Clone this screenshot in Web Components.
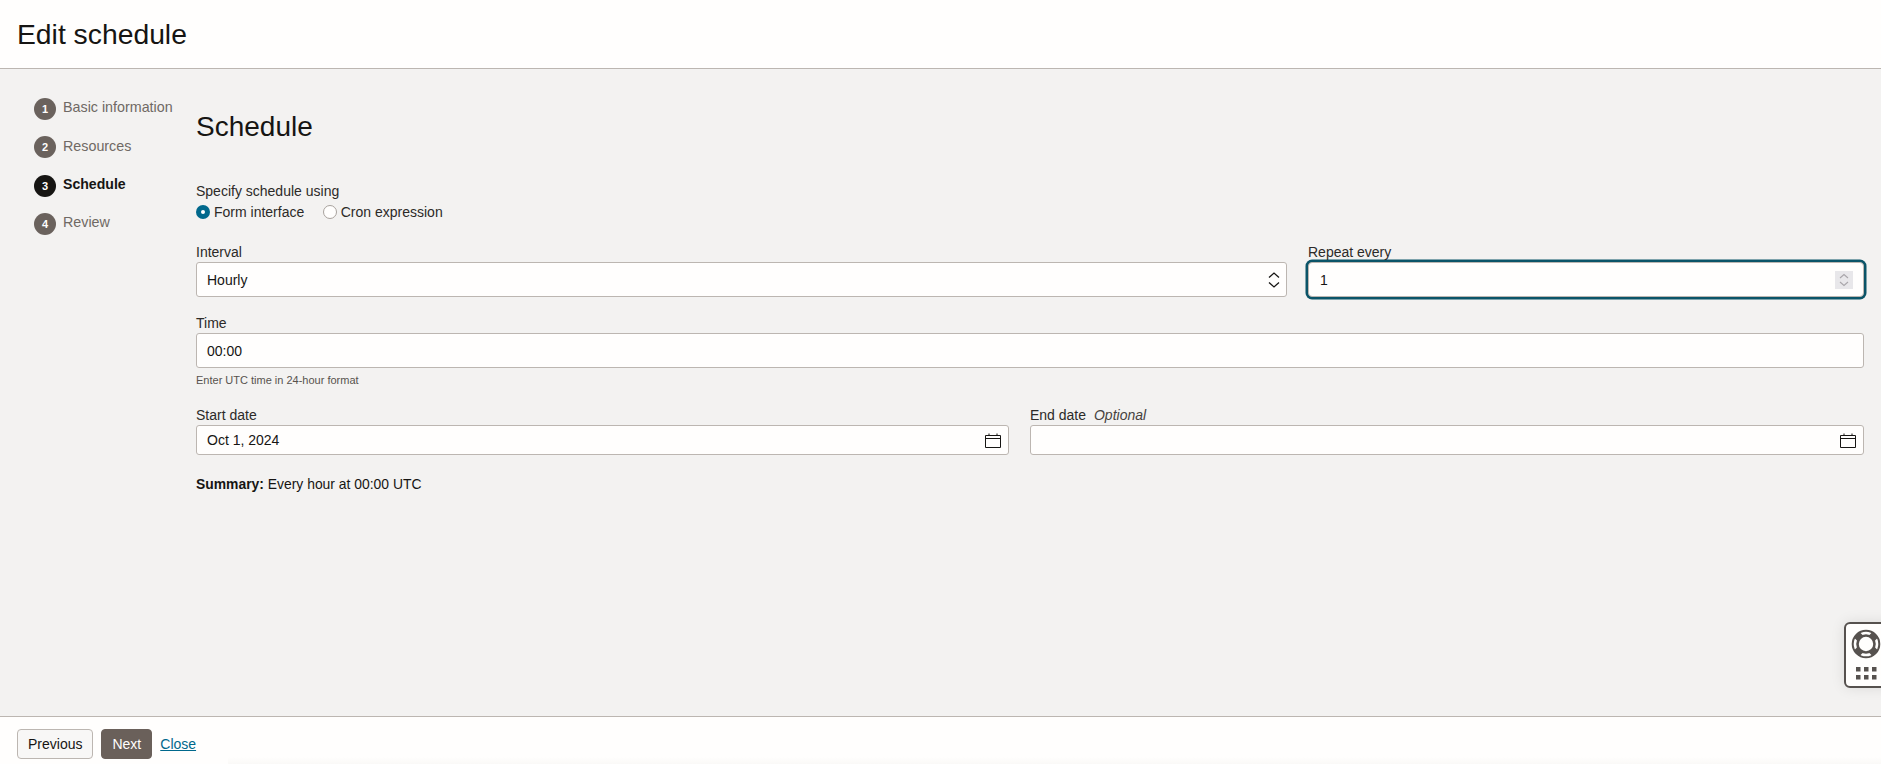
<!DOCTYPE html>
<html lang="en">
<head>
<meta charset="utf-8">
<title>Edit schedule</title>
<style>
  html, body { height: 100%; margin: 0; }
  body {
    display: flex;
    flex-direction: column;
    height: 764px;
    overflow: hidden;
    font-family: "Liberation Sans", Arial, sans-serif;
    color: #161513;
    background: #f3f2f1;
  }
</style>
</head>
<body>

<template id="tpl-page-header">
  <style>
    :host { display: flex; align-items: center; flex: none; box-sizing: border-box; height: 69px; padding: 0 17px; background: #fffefd; border-bottom: 1px solid #bcb6b1; }
    h1 { margin: 0; font-size: 28.300px; font-weight: 400; line-height: 36px; }
  </style>
  <h1><slot></slot></h1>
</template>

<template id="tpl-step-list">
  <style>
    :host { display: flex; flex-direction: column; gap: 16.33px; flex: none; box-sizing: border-box; width: 196px; padding: 29px 0 0 34px; }
  </style>
  <slot></slot>
</template>

<template id="tpl-step-item">
  <style>
    :host { display: flex; gap: 7px; height: 22px; font-size: 14.3px; line-height: 20px; color: #6f6964; white-space: nowrap; }
    :host([current]) { color: #161513; font-weight: 700; font-size: 14.1px; }
    .num { display: flex; align-items: center; justify-content: center; flex: none; width: 22px; height: 22px; border-radius: 50%; background: #6a625d; color: #fffefd; font-size: 11px; font-weight: 700; }
    :host([current]) .num { background: #161513; font-size: 11px; }
    .label { margin-top: -.6px; }
  </style>
  <span class="num"></span><span class="label"><slot></slot></span>
</template>

<template id="tpl-form-field">
  <style>
    :host { display: block; min-width: 0; font-size: 14px; }
    label { display: block; height: 17px; line-height: 14px; white-space: nowrap; color: #2c2a28; }
    i { margin-left: 4px; color: #46423f; }
    .hint { display: none; margin-top: 6px; font-size: 11px; line-height: 13px; color: #57524e; }
    :host([hint]) .hint { display: block; }
  </style>
  <label></label>
  <slot></slot>
  <div class="hint"></div>
</template>

<template id="tpl-text-box">
  <style>
    :host { display: flex; align-items: center; box-sizing: border-box; height: 35px; padding: 0 10px; background: #fffefd; border: 1px solid #bcb6b1; border-radius: 3px; font-size: 14px; color: #161513; }
    :host([compact]) { height: 30px; }
    :host([focused]) { box-shadow: 0 0 0 2.5px #0b5468; border-radius: 4px; }
    .value { flex: 1; white-space: nowrap; }
    :host([focused]) .value { padding-left: 1px; }
    svg { display: block; flex: none; }
    .cal { margin-right: -3px; }
    .spin { display: flex; align-items: center; justify-content: center; width: 18px; height: 18px; background: #e8e7ea; }
    .sel { margin-right: -4px; }
  </style>
  <span class="value"><slot></slot></span>
  <span class="icon"></span>
</template>

<template id="tpl-radio-group">
  <style>
    :host { display: block; font-size: 14px; color: #2c2a28; }
    .title { height: 21px; line-height: 21px; }
    .opts { display: flex; gap: 18.5px; height: 20px; align-items: center; }
  </style>
  <div class="title"></div>
  <div class="opts"><slot></slot></div>
</template>

<template id="tpl-radio-item">
  <style>
    :host { display: inline-flex; align-items: center; gap: 4px; white-space: nowrap; }
    .dot { box-sizing: border-box; width: 14px; height: 14px; border-radius: 50%; background: #fffefd; border: 1px solid #a8a29d; }
    :host([checked]) .dot { background: #00688c; border: 0; position: relative; }
    :host([checked]) .dot::after { content: ""; position: absolute; left: 5px; top: 5px; width: 4px; height: 4px; border-radius: 50%; background: #fff; }
  </style>
  <span class="dot"></span><slot></slot>
</template>

<template id="tpl-wizard-footer">
  <style>
    :host { display: flex; align-items: flex-start; gap: 8px; flex: none; box-sizing: border-box; height: 48px; padding: 12px 17px 0; background: #fffefd; border-top: 1px solid #bcb6b1; position: relative; }
    /* faint shadow along the bottom edge of the reference */
    :host::after { content: ""; position: absolute; left: 228px; right: 0; bottom: 0; height: 7px; background: linear-gradient(#fffefd, #faf9f7); }
  </style>
  <slot></slot>
</template>

<template id="tpl-wizard-button">
  <style>
    :host { display: inline-flex; align-items: center; justify-content: center; box-sizing: border-box; height: 30px; padding: 0 10px; font-size: 14px; border-radius: 4px; border: 1px solid #bcb6b1; background: #f8f7f6; color: #161513; }
    :host([primary]) { background: #6a605a; border-color: #6a605a; color: #fffefd; }
  </style>
  <slot></slot>
</template>

<template id="tpl-help-tab">
  <style>
    :host { position: absolute; left: 1844px; top: 622px; box-sizing: border-box; width: 50px; height: 66px; background: #fffefd; border: 2px solid #56514e; border-radius: 6px; box-shadow: 0 0 14px rgba(0,0,0,.1); }
    svg { position: absolute; display: block; }
    .buoy { left: 5px; top: 5px; }
    .dots { left: 10px; top: 43px; }
  </style>
  <svg class="buoy" width="30" height="30" viewBox="0 0 30 30" fill="none">
    <circle cx="15" cy="15" r="13.300" stroke="#56514e" stroke-width="2"/>
    <circle cx="15" cy="15" r="8.500" stroke="#56514e" stroke-width="2.600"/>
    <path d="M5.500 5.500 9.500 9.500M24.500 5.500 20.500 9.500M5.500 24.500 9.500 20.500M24.500 24.500 20.500 20.500" stroke="#56514e" stroke-width="8"/>
  </svg>
  <svg class="dots" width="24" height="13" viewBox="0 0 24 13" fill="#56514e">
    <rect x="0" y="0" width="4.500" height="4.500"/><rect x="8" y="0" width="4.500" height="4.500"/><rect x="16" y="0" width="4.500" height="4.500"/>
    <rect x="0" y="8" width="4.500" height="4.500"/><rect x="8" y="8" width="4.500" height="4.500"/><rect x="16" y="8" width="4.500" height="4.500"/>
  </svg>
</template>

<page-header>Edit schedule</page-header>

<div style="display:flex; flex:1; min-height:0">
  <step-list>
    <step-item num="1">Basic information</step-item>
    <step-item num="2">Resources</step-item>
    <step-item num="3" current>Schedule</step-item>
    <step-item num="4">Review</step-item>
  </step-list>
  <schedule-form></schedule-form>
</div>

<wizard-footer>
  <wizard-button>Previous</wizard-button>
  <wizard-button primary>Next</wizard-button>
  <wizard-link>Close</wizard-link>
</wizard-footer>

<help-tab></help-tab>

<script>
// clones a template into an open shadow root
function mount(el, id) {
  el.attachShadow({ mode: 'open' });
  el.shadowRoot.appendChild(document.getElementById(id).content.cloneNode(true));
  return el.shadowRoot;
}

const ICONS = {
  select: `<svg class="sel" width="12" height="16" viewBox="0 0 12 16" fill="none" stroke="#161513" stroke-width="1.300"><path d="M1 5.500 6 1 11 5.500M1 10.500 6 15 11 10.500"/></svg>`,
  spin: `<span class="spin"><svg width="12" height="14" viewBox="0 0 12 14" fill="none" stroke="#a9a6aa" stroke-width="1.100"><path d="M2 5 6 1.500 10 5M2 9 6 12.500 10 9"/></svg></span>`,
  calendar: `<svg class="cal" width="16" height="15" viewBox="0 0 16 15" fill="none" stroke="#161513"><path d="M.5 2.500h15v12H.5zM.5 5.500h15M4 .5v2M12 .5v2"/></svg>`
};

customElements.define('page-header', class extends HTMLElement {
  constructor() { super(); mount(this, 'tpl-page-header'); }
});

customElements.define('step-list', class extends HTMLElement {
  constructor() { super(); mount(this, 'tpl-step-list'); }
});

customElements.define('step-item', class extends HTMLElement {
  constructor() { super(); mount(this, 'tpl-step-item'); }
  connectedCallback() {
    this.shadowRoot.querySelector('.num').textContent = this.getAttribute('num');
  }
});

customElements.define('form-field', class extends HTMLElement {
  constructor() { super(); mount(this, 'tpl-form-field'); }
  connectedCallback() {
    const label = this.shadowRoot.querySelector('label');
    label.textContent = this.getAttribute('label');
    if (this.hasAttribute('optional')) {
      const i = document.createElement('i');
      i.textContent = ' ' + this.getAttribute('optional');
      label.appendChild(i);
    }
    this.shadowRoot.querySelector('.hint').textContent = this.getAttribute('hint') || '';
  }
});

customElements.define('text-box', class extends HTMLElement {
  constructor() { super(); mount(this, 'tpl-text-box'); }
  connectedCallback() {
    this.shadowRoot.querySelector('.icon').innerHTML = ICONS[this.getAttribute('icon')] || '';
  }
});

customElements.define('radio-group', class extends HTMLElement {
  constructor() { super(); mount(this, 'tpl-radio-group'); }
  connectedCallback() {
    this.shadowRoot.querySelector('.title').textContent = this.getAttribute('label');
  }
});

customElements.define('radio-item', class extends HTMLElement {
  constructor() { super(); mount(this, 'tpl-radio-item'); }
});

customElements.define('wizard-footer', class extends HTMLElement {
  constructor() { super(); mount(this, 'tpl-wizard-footer'); }
});

customElements.define('wizard-button', class extends HTMLElement {
  constructor() { super(); mount(this, 'tpl-wizard-button'); }
});

customElements.define('wizard-link', class extends HTMLElement {
  constructor() {
    super();
    this.attachShadow({ mode: 'open' }).innerHTML = `
      <style>
        :host { display: inline-block; font-size: 14px; line-height: 30px; }
        a { color: #00688c; text-decoration: underline; }
      </style>
      <a href="#"><slot></slot></a>`;
  }
});

customElements.define('help-tab', class extends HTMLElement {
  constructor() { super(); mount(this, 'tpl-help-tab'); }
});

// the main form, composed from the elements above
customElements.define('schedule-form', class extends HTMLElement {
  constructor() {
    super();
    this.attachShadow({ mode: 'open' }).innerHTML = `
      <style>
        :host { display: block; flex: 1; min-width: 0; box-sizing: border-box; padding-right: 17px; }
        h2 { margin: 0; box-sizing: border-box; height: 112px; padding-top: 40px; font-size: 28px; line-height: 36px; font-weight: 400; }
        .row { display: flex; gap: 21px; }
        .row > * { flex: 1 1 0; }
        radio-group { height: 64px; }
        .summary { margin-top: 21px; font-size: 13.9px; line-height: 17px; }
        .time { margin-top: 19px; }
        .dates { margin-top: 21px; }
      </style>
      <h2>Schedule</h2>
      <radio-group label="Specify schedule using">
        <radio-item checked>Form interface</radio-item>
        <radio-item>Cron expression</radio-item>
      </radio-group>
      <div class="row">
        <form-field label="Interval" style="flex:0 0 1091px"><text-box icon="select">Hourly</text-box></form-field>
        <form-field label="Repeat every"><text-box icon="spin" focused>1</text-box></form-field>
      </div>
      <form-field class="time" label="Time" hint="Enter UTC time in 24-hour format"><text-box>00:00</text-box></form-field>
      <div class="row dates">
        <form-field label="Start date" style="flex:0 0 813px"><text-box compact icon="calendar">Oct 1, 2024</text-box></form-field>
        <form-field label="End date" optional="Optional"><text-box compact icon="calendar"></text-box></form-field>
      </div>
      <div class="summary"><b>Summary:</b> Every hour at 00:00 UTC</div>`;
  }
});
</script>
</body>
</html>
